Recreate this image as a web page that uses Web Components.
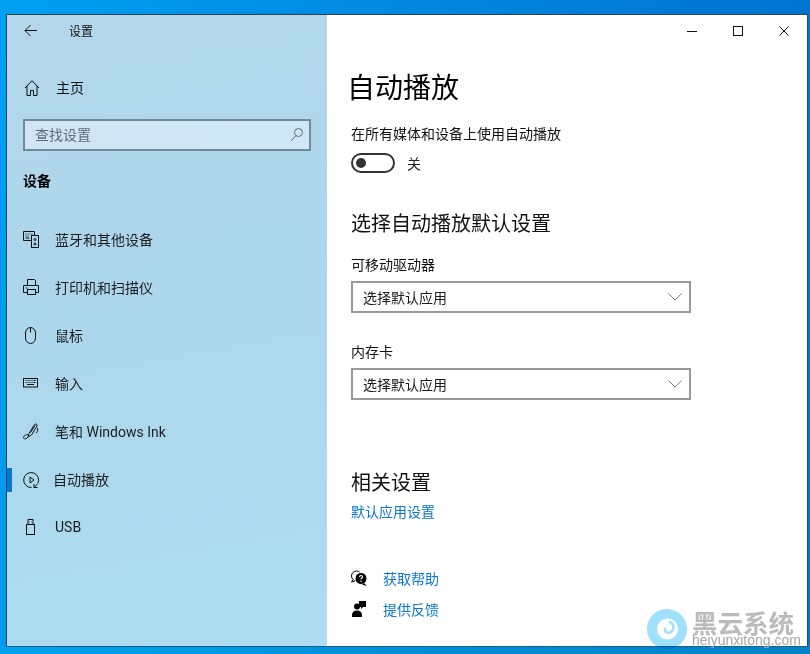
<!DOCTYPE html>
<html lang="zh-CN">
<head>
<meta charset="utf-8">
<title>设置</title>
<style>
  html, body { margin: 0; height: 100%; }
  body {
    background:
      linear-gradient(to right, #00a2ee, #0090d8 50%, #0082c8) bottom / 100% 8px no-repeat,
      linear-gradient(100deg, #00a0f0 0%, #0090e4 30%, #0078d4 75%, #0074cc 100%);
    font-family: "Noto Sans CJK SC", "Noto Sans", sans-serif;
    overflow: hidden;
  }
</style>
</head>
<body>
<settings-window>
  <settings-sidebar slot="side">
    <nav-item icon="bluetooth">蓝牙和其他设备</nav-item>
    <nav-item icon="printer">打印机和扫描仪</nav-item>
    <nav-item icon="mouse">鼠标</nav-item>
    <nav-item icon="keyboard">输入</nav-item>
    <nav-item icon="pen">笔和 Windows Ink</nav-item>
    <nav-item icon="autoplay" active>自动播放</nav-item>
    <nav-item icon="usb">USB</nav-item>
  </settings-sidebar>
  <settings-page slot="main"></settings-page>
</settings-window>
<water-mark></water-mark>

<script>
const ICONS = {
  bluetooth: '<path d="M9 9.500H1.500V.5h11v4"/><path d="M3.500 3h1M5.500 3h1M7.500 3h1M9.500 3h1M3.500 5h1M5.500 5h1M3.500 7h4"/><rect x="9.500" y="4.500" width="7" height="12"/><circle cx="13" cy="8.500" r="1"/><circle cx="13" cy="13" r="1"/>',
  printer: '<path d="M5.500 6V.5h7l1 1V6"/><path d="M5 13.500H1.500v-7h15v7H13"/><rect x="5.500" y="10.500" width="8" height="5"/><path d="M3.500 9h2"/>',
  mouse: '<rect x="3.500" y=".5" width="10" height="16" rx="5" ry="5.500"/><path d="M8.500 .5v5"/>',
  keyboard: '<rect x="1.500" y="3.500" width="14" height="8.500"/><path d="M3.500 5.500h1M5.500 5.500h1M7.500 5.500h1M9.500 5.500h1M11.500 5.500h2M3.500 7.500h1M5.500 7.500h1M7.500 7.500h1M9.500 7.500h1M11.500 7.500h2M5 9.500h7"/>',
  pen: '<path d="M6 14l1-3.500 5.500-9c1-1.300 3.200 0 2.500 1.500l-5.500 9zM8.500 9.500l4.500-7"/><path d="M6.500 11.500c-3 0-5.500 2-5 3.500s3.500 1 4.500-1M15 5c1.500 1 1 3-1 5"/>',
  autoplay: '<path d="M9.500 16.500A7.500 7.500 0 1 1 15.800 12.500"/><path d="M8 6l4 3-4 3z"/><path d="M15.500 13l-3.500 3.500M12 13v3.500h3.500"/>',
  usb: '<rect x="4.500" y="5.500" width="8" height="10"/><path d="M6 5.500V.5h5v5M7.500 3h.5M9.500 3h.5"/>',
};

// small helper so every element does its shadow root the same way
function shadow(el, html) {
  el.attachShadow({ mode: 'open' }).innerHTML = html;
}

class SettingsWindow extends HTMLElement {
  constructor() {
    super();
    shadow(this, `
      <style>
        :host { display: flex; box-sizing: border-box; width: 810px; height: 654px; padding: 14px 2px 7px 6px; }
        .frame { flex: 1; display: flex; border: 1px solid #2c4352; border-bottom-color: #1d5f88; border-right-color: #24506c; position: relative; }
        .side { width: 320px; flex-shrink: 0; display: flex; }
        .main { flex: 1; background: #fff; display: flex; min-width: 0; }
      </style>
      <div class="frame">
        <div class="side"><slot name="side"></slot></div>
        <div class="main"><slot name="main"></slot></div>
      </div>`);
  }
}

class SettingsSidebar extends HTMLElement {
  constructor() {
    super();
    shadow(this, `
      <style>
        :host {
          display: flex; flex-direction: column; flex: 1;
          background: linear-gradient(170deg, #b3d7ea 0%, #acd6ec 40%, #addcf1 100%);
          color: #111;
          font-size: 14px;
        }
        .top { height: 32px; display: flex; align-items: center; }
        .back { width: 48px; display: flex; justify-content: center; }
        .title { margin-left: 14px; font-size: 12px; line-height: 32px; }
        .home { height: 48px; margin-top: 17px; display: flex; align-items: center; padding-left: 16px; gap: 17px; }
        .home span { position: relative; top: -1px; }
        .search { box-sizing: border-box; margin: 7px 16px 0; height: 32px; border: 2px solid #6f8a9b; background: linear-gradient(100deg, #d0e6f3, #cfe6f4); display: flex; align-items: center; padding: 0 2px 0 10px; color: #5f6b73; justify-content: space-between; }
        .search span { position: relative; top: -1px; }
        .group { font-weight: 700; margin: 19px 0 0 16px; height: 21px; line-height: 21px; font-size: 14px; color: #000; }
        nav { margin-top: 25px; display: flex; flex-direction: column; }
        svg { fill: none; stroke: #111; stroke-width: 1; display: block; }
      </style>
      <div class="top">
        <div class="back"><svg width="16" height="16" viewBox="0 0 16 16"><path d="M2 7.500h12M7.500 2L2 7.500 7.500 13"/></svg></div>
        <span class="title">设置</span>
      </div>
      <div class="home">
        <svg width="16" height="16" viewBox="0 0 16 16"><path d="M2 8l7-7.300L16 8M4 6v9.500h3.500v-5h3v5H14V6"/></svg>
        <span>主页</span>
      </div>
      <div class="search">
        <span>查找设置</span>
        <svg width="16" height="16" viewBox="0 0 16 16" style="stroke:#5f6b73"><circle cx="7.500" cy="5.500" r="4"/><path d="M5 8.500L0 14"/></svg>
      </div>
      <div class="group">设备</div>
      <nav><slot></slot></nav>`);
  }
}

class NavItem extends HTMLElement {
  constructor() {
    super();
    const active = this.hasAttribute('active');
    shadow(this, `
      <style>
        :host { display: flex; align-items: center; height: 48px; position: relative; font-size: 14px; color: #1d1d1d; font-family: Roboto, "Noto Sans CJK SC", sans-serif; }
        .icon { width: 18px; height: 18px; margin-left: 15px; fill: none; stroke: #111; stroke-width: 1; flex-shrink: 0; }
        .label { margin-left: ${active ? 13 : 15}px; position: relative; top: -1px; }
        .mark { position: absolute; left: 0; top: 12px; width: 5px; height: 24px; background: #0078d7; }
      </style>
      ${active ? '<div class="mark"></div>' : ''}
      <svg class="icon" viewBox="0 0 18 18">${ICONS[this.getAttribute('icon')] || ''}</svg>
      <span class="label"><slot></slot></span>`);
  }
}

class ToggleSwitch extends HTMLElement {
  constructor() {
    super();
    shadow(this, `
      <style>
        :host { display: flex; align-items: center; gap: 12px; font-size: 14px; color: #222; }
        .track { box-sizing: border-box; width: 44px; height: 20px; border: 2px solid #333; border-radius: 10px; display: flex; align-items: center; padding-left: 3px; }
        .thumb { width: 10px; height: 10px; border-radius: 50%; background: #333; }
      </style>
      <div class="track"><div class="thumb"></div></div>
      <span><slot></slot></span>`);
  }
}

class ComboBox extends HTMLElement {
  constructor() {
    super();
    shadow(this, `
      <style>
        :host { display: flex; box-sizing: border-box; width: 340px; height: 32px; border: 2px solid #999; align-items: center; justify-content: space-between; padding: 0 7px 0 10px; font-size: 14px; color: #1a1a1a; }
        svg { fill: none; stroke: #777; stroke-width: 1; display: block; }
      </style>
      <span><slot></slot></span>
      <svg width="14" height="8" viewBox="0 0 14 8"><path d="M.5 .5L7 7l6.500-6.500"/></svg>`);
  }
}

class LinkRow extends HTMLElement {
  constructor() {
    super();
    shadow(this, `
      <style>
        :host { display: flex; align-items: center; gap: 14px; height: 31px; font-size: 14px; color: #0a78d4; }
        .icon { width: 18px; height: 18px; display: flex; }
      </style>
      <span class="icon"><slot name="icon"></slot></span>
      <span><slot></slot></span>`);
  }
}

class SettingsPage extends HTMLElement {
  constructor() {
    super();
    shadow(this, `
      <style>
        :host { display: flex; flex: 1; flex-direction: column; position: relative; padding-left: 24px; color: #111; }
        .controls { position: absolute; top: 0; right: 0; display: flex; }
        .controls div { width: 46px; height: 32px; display: flex; align-items: center; justify-content: center; }
        .controls svg { fill: none; stroke: #111; stroke-width: 1; display: block; }
        h1 { margin: 49px 0 0 -4px; font-size: 28px; font-weight: 400; line-height: 44px; color: #000; }
        .desc { font-size: 14px; line-height: 20px; margin-top: 15px; }
        toggle-switch { margin-top: 10px; }
        h2 { font-size: 20px; font-weight: 400; line-height: 28px; margin: 0; color: #111; }
        .first { margin-top: 36px; }
        .label { font-size: 14px; line-height: 20px; margin-bottom: 7px; }
        .l1 { margin-top: 17px; }
        .l2 { margin-top: 28px; }
        .rel { margin-top: 68px; }
        .link { color: #0a78d4; font-size: 14px; line-height: 20px; margin-top: 5px; }
        .help { margin-top: 41px; display: flex; flex-direction: column; }
      </style>
      <div class="controls">
        <div><svg width="10" height="10" viewBox="0 0 10 10"><path d="M0 5.500h10"/></svg></div>
        <div><svg width="10" height="10" viewBox="0 0 10 10"><rect x=".5" y=".5" width="9" height="9"/></svg></div>
        <div><svg width="10" height="10" viewBox="0 0 10 10"><path d="M.5 .5l9 9M9.500 .5l-9 9"/></svg></div>
      </div>
      <h1>自动播放</h1>
      <div class="desc">在所有媒体和设备上使用自动播放</div>
      <toggle-switch>关</toggle-switch>
      <h2 class="first">选择自动播放默认设置</h2>
      <div class="label l1">可移动驱动器</div>
      <combo-box>选择默认应用</combo-box>
      <div class="label l2">内存卡</div>
      <combo-box>选择默认应用</combo-box>
      <h2 class="rel">相关设置</h2>
      <div class="link">默认应用设置</div>
      <div class="help">
        <link-row>
          <svg slot="icon" width="18" height="18" viewBox="0 0 18 18"><circle cx="5.500" cy="7" r="5" fill="none" stroke="#000"/><path d="M2 10.500L.5 13l3.500-1" fill="#fff" stroke="#000"/><circle cx="10" cy="9.500" r="6" fill="#000" stroke="#fff"/><path d="M13 14l3 3-5-1.500z" fill="#000"/><path d="M8.500 8c0-2 3-2 3 0 0 1-1.500 1-1.500 2.200" fill="none" stroke="#fff" stroke-width="1.200"/><path d="M9.400 11.500h1.200v1.200H9.400z" fill="#fff"/></svg>
          获取帮助
        </link-row>
        <link-row>
          <svg slot="icon" width="18" height="18" viewBox="0 0 18 18" fill="#000"><circle cx="6" cy="6.500" r="3"/><path d="M1 17v-2c0-3 2-4.500 5-4.500s5 1.500 5 4.500v2z"/><path d="M8 1h7v6h-3l-2 2V7H8z"/></svg>
          提供反馈
        </link-row>
      </div>`);
  }
}

class WaterMark extends HTMLElement {
  constructor() {
    super();
    shadow(this, `
      <style>
        :host { position: absolute; left: 646px; top: 608px; display: flex; align-items: flex-start; gap: 4px; }
        svg { mix-blend-mode: multiply; }
        .text { display: flex; flex-direction: column; color: #bbb; font-family: "Liberation Sans", "Noto Sans CJK SC", sans-serif; }
        .cn { font-family: "Noto Sans CJK SC", sans-serif; font-weight: 700; font-size: 25.500px; line-height: 27px; }
        .en { font-size: 14px; line-height: 14px; color: #a6a6a6; margin-top: -2px; }
      </style>
      <svg width="42" height="42" viewBox="0 0 42 42"><circle cx="21" cy="21" r="20" fill="#9fe0fb"/><circle cx="21.500" cy="21" r="10.500" fill="#fff"/><path d="M24 14c4.500 2 4.500 8 .5 10.300-3 1.500-6.500-.8-5.500-3.800" fill="none" stroke="#9fe0fb" stroke-width="2.500" stroke-linecap="round"/></svg>
      <div class="text"><span class="cn">黑云系统</span><span class="en">heiyunxitong.com</span></div>`);
  }
}

customElements.define('settings-window', SettingsWindow);
customElements.define('settings-sidebar', SettingsSidebar);
customElements.define('nav-item', NavItem);
customElements.define('toggle-switch', ToggleSwitch);
customElements.define('combo-box', ComboBox);
customElements.define('link-row', LinkRow);
customElements.define('settings-page', SettingsPage);
customElements.define('water-mark', WaterMark);
</script>
</body>
</html>
